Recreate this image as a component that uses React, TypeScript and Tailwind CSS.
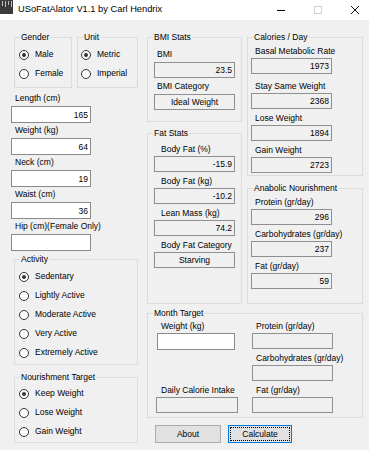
import type { ReactNode } from 'react';

const FONT = "font-['Liberation_Sans',Arial,sans-serif]";

function GroupBox({ title, className, children }: { title: string; className: string; children: ReactNode }) {
    return (
        <fieldset className={`border border-[#dcdcdc] ${className}`}>
            <legend className="ml-[5px] px-px leading-[10px]">{title}</legend>
            {children}
        </fieldset>
    );
}

function Radio({ label, checked }: { label: string; checked?: boolean }) {
    return (
        <div className="flex items-center gap-[6px] h-[19px]">
            <span className="flex items-center justify-center w-[10px] h-[10px] rounded-full border border-[#333] bg-white">
                {checked && <span className="w-[4px] h-[4px] rounded-full bg-[#333]" />}
            </span>
            <span>{label}</span>
        </div>
    );
}

function Label({ text, indent }: { text: string; indent: string }) {
    return <div className={`h-[12px] leading-[12px] whitespace-nowrap ${indent}`}>{text}</div>;
}

function Box({ value, center, white, className }: { value?: string; center?: boolean; white?: boolean; className: string }) {
    return (
        <input
            readOnly
            value={value ?? ''}
            className={[
                'block px-[2px] leading-[14px] outline-none',
                center ? 'text-center' : 'text-right',
                white ? 'bg-white border border-[#8a8a8a]' : 'bg-[#f0f0f0] border border-[#8f8f8f]',
                className,
            ].join(' ')}
        />
    );
}

/* 라벨 + 입력칸 한 쌍 */
function Field({ label, value, indent, white, center, gap = 'mt-px', className = 'mb-[3px]' }: {
    label: string;
    value?: string;
    indent: string;
    white?: boolean;
    center?: boolean;
    gap?: string;
    className?: string;
}) {
    return (
        <div className={className}>
            <Label text={label} indent={indent} />
            <Box value={value} white={white} center={center} className={`${gap} w-[81px] h-[16px]`} />
        </div>
    );
}

function TitleBar() {
    return (
        <div className="flex items-center h-[20px] bg-white">
            <div className="relative w-[13px] h-[14px] self-start bg-[#3b3b3b]">
                <div className="flex gap-[2px] pt-px pl-[2px]">
                    <span className="w-px h-[5px] bg-[#bdbdbd]" />
                    <span className="w-px h-[6px] bg-[#bdbdbd]" />
                    <span className="w-px h-[4px] bg-[#bdbdbd]" />
                    <span className="w-px h-[6px] bg-[#bdbdbd]" />
                </div>
            </div>
            <span className="ml-[5px] text-[9.3px] text-black">USoFatAlator V1.1 by Carl Hendrix</span>
            <div className="ml-auto flex items-center gap-[29px] pr-[10px]">
                <span className="w-[8px] h-px bg-black" />
                <span className="w-[8px] h-[8px] border border-[#cfcfcf]" />
                <svg width="8" height="8" viewBox="0 0 8 8" aria-hidden="true">
                    <path d="M0 0L8 8M8 0L0 8" stroke="#111" strokeWidth="1" />
                </svg>
            </div>
        </div>
    );
}

export default function App() {
    return (
        <div className={`w-[369px] h-[450px] bg-[#f0f0f0] text-[8.5px] text-black ${FONT}`}>
            <TitleBar />
            <div className="flex gap-[9px] px-[11px] pt-[12px]">
                {/* 왼쪽 열 */}
                <div className="w-[127px] flex flex-col">
                    <div className="flex gap-[5px] ml-[3px]">
                        <GroupBox title="Gender" className="w-[58px] h-[56px]">
                            <div className="pl-[4px] pt-[3px]">
                                <Radio label="Male" checked />
                                <Radio label="Female" />
                            </div>
                        </GroupBox>
                        <GroupBox title="Unit" className="w-[61px] h-[56px]">
                            <div className="pl-[3px] pt-[3px]">
                                <Radio label="Metric" checked />
                                <Radio label="Imperial" />
                            </div>
                        </GroupBox>
                    </div>

                    <div className="mt-[4px] flex flex-col">
                        {[
                            ['Length (cm)', '165'],
                            ['Weight (kg)', '64'],
                            ['Neck (cm)', '19'],
                            ['Waist (cm)', '36'],
                            ['Hip (cm)(Female Only)', ''],
                        ].map(([label, value]) => (
                            <div key={label} className="mb-px">
                                <Label text={label} indent="ml-[4px]" />
                                <Box value={value} white className="mt-[2px] w-[80px] h-[17px]" />
                            </div>
                        ))}
                    </div>

                    <GroupBox title="Activity" className="ml-[3px] mt-[2px] w-[124px] h-[111px]">
                        <div className="pl-[4px] pt-[3px]">
                            <Radio label="Sedentary" checked />
                            <Radio label="Lightly Active" />
                            <Radio label="Moderate Active" />
                            <Radio label="Very Active" />
                            <Radio label="Extremely Active" />
                        </div>
                    </GroupBox>

                    <GroupBox title="Nourishment Target" className="ml-[3px] mt-[7px] w-[124px] h-[71px]">
                        <div className="pl-[4px] pt-[2px]">
                            <Radio label="Keep Weight" checked />
                            <Radio label="Lose Weight" />
                            <Radio label="Gain Weight" />
                        </div>
                    </GroupBox>
                </div>

                {/* 오른쪽 영역 */}
                <div className="flex flex-col">
                    <div className="flex gap-[5px]">
                        <div className="w-[95px] flex flex-col">
                            <GroupBox title="BMI Stats" className="h-[90px]">
                                <div className="pl-[6px] pt-[6px]">
                                    <Field label="BMI" value="23.5" indent="ml-[3px]" gap="mt-[2px]" className="mb-[2px]" />
                                    <Field label="BMI Category" value="Ideal Weight" center indent="ml-[3px]" gap="mt-[2px]" />
                                </div>
                            </GroupBox>
                            <GroupBox title="Fat Stats" className="mt-[6px] h-[176px]">
                                <div className="pl-[6px] pt-[5px]">
                                    <Field label="Body Fat (%)" value="-15.9" indent="ml-[7px]" />
                                    <Field label="Body Fat (kg)" value="-10.2" indent="ml-[7px]" />
                                    <Field label="Lean Mass (kg)" value="74.2" indent="ml-[7px]" />
                                    <Field label="Body Fat Category" value="Starving" center indent="ml-[7px]" />
                                </div>
                            </GroupBox>
                        </div>

                        <div className="w-[116px] flex flex-col">
                            <GroupBox title="Calories / Day" className="h-[144px]">
                                <div className="pl-[3px] pt-[3px]">
                                    <Field label="Basal Metabolic Rate" value="1973" indent="ml-[4px]" className="mb-[6px]" />
                                    <Field label="Stay Same Weight" value="2368" indent="ml-[4px]" />
                                    <Field label="Lose Weight" value="1894" indent="ml-[4px]" />
                                    <Field label="Gain Weight" value="2723" indent="ml-[4px]" />
                                </div>
                            </GroupBox>
                            <GroupBox title="Anabolic Nourishment" className="mt-[7px] h-[121px]">
                                <div className="pl-[3px] pt-[3px]">
                                    <Field label="Protein (gr/day)" value="296" indent="ml-[4px]" />
                                    <Field label="Carbohydrates (gr/day)" value="237" indent="ml-[4px]" />
                                    <Field label="Fat (gr/day)" value="59" indent="ml-[4px]" />
                                </div>
                            </GroupBox>
                        </div>
                    </div>

                    <GroupBox title="Month Target" className="mt-[4px] w-[216px] h-[110px]">
                        <div className="flex pt-[2px]">
                            <div className="w-[104px] pl-[9px] flex flex-col">
                                <Label text="Weight (kg)" indent="ml-[4px]" />
                                <Box white className="mt-px w-[78px] h-[17px]" />
                                <div className="mt-[34px]">
                                    <Label text="Daily Calorie Intake" indent="ml-[4px]" />
                                    <Box className="mt-px -ml-px w-[82px] h-[16px]" />
                                </div>
                            </div>
                            <div className="flex flex-col">
                                <Field label="Protein (gr/day)" indent="ml-[4px]" />
                                <Field label="Carbohydrates (gr/day)" indent="ml-[4px]" />
                                <Field label="Fat (gr/day)" indent="ml-[4px]" />
                            </div>
                        </div>
                    </GroupBox>

                    <div className="flex gap-[7px] ml-[8px] mt-[7px]">
                        <button className="w-[66px] h-[18px] bg-[#e1e1e1] border border-[#adadad]">About</button>
                        <button className="w-[64px] h-[18px] bg-[#e1e1e1] border border-[#0078d7] p-px">
                            <span className="flex items-center justify-center w-full h-full border border-dotted border-black">
                                Calculate
                            </span>
                        </button>
                    </div>
                </div>
            </div>
        </div>
    );
}
